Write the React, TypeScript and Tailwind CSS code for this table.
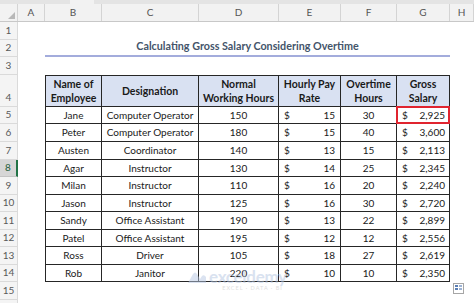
import React from 'react';

const colLetters = ['A', 'B', 'C', 'D', 'E', 'F', 'G', 'H'];
const colWidths = ['w-[27px]', 'w-[57px]', 'w-[97px]', 'w-[80px]', 'w-[62px]', 'w-[56px]', 'w-[53px]', 'w-[24px]'];

const rowHeights = [
  'h-[18px]', 'h-[17px]', 'h-[18px]', 'h-[32px]', 'h-[17px]', 'h-[18px]', 'h-[18px]', 'h-[17px]',
  'h-[18px]', 'h-[17px]', 'h-[18px]', 'h-[17px]', 'h-[18px]', 'h-[17px]', 'h-[18px]', 'h-[18px]',
];

const employees = [
  ['Jane', 'Computer Operator', '150', '15', '30', '2,925'],
  ['Peter', 'Computer Operator', '180', '15', '40', '3,600'],
  ['Austen', 'Coordinator', '140', '13', '15', '2,113'],
  ['Agar', 'Instructor', '130', '14', '25', '2,345'],
  ['Milan', 'Instructor', '110', '16', '20', '2,240'],
  ['Jason', 'Instructor', '125', '16', '30', '2,720'],
  ['Sandy', 'Office Assistant', '190', '13', '22', '2,899'],
  ['Patel', 'Office Assistant', '195', '12', '12', '2,556'],
  ['Ross', 'Driver', '105', '18', '27', '2,619'],
  ['Rob', 'Janitor', '220', '10', '10', '2,350'],
];

const cell = 'border-r border-b border-[#262626] flex items-center shrink-0';

function RowNumber({ n, h }: { n: number; h: string }) {
  const selected = n === 8;
  return (
    <div
      className={`w-[18px] ${h} shrink-0 flex items-end justify-center pb-[1px] text-[10px] border-b border-r ${
        selected
          ? 'bg-[#d6d6d6] text-[#1e5e3a] border-b-[#c3c3c3] border-r-2 border-r-[#217346]'
          : 'bg-[#f4f4f4] text-[#595959] border-[#dadada]'
      }`}
    >
      {n <= 15 ? n : ''}
    </div>
  );
}

function Header() {
  const heads = [
    ['Name of', 'Employee'],
    ['Designation'],
    ['Normal', 'Working Hours'],
    ['Hourly Pay', 'Rate'],
    ['Overtime', 'Hours'],
    ['Gross', 'Salary'],
  ];
  return (
    <>
      {heads.map((lines, i) => (
        <div
          key={i}
          className={`${cell} ${colWidths[i + 1]} border-t ${i === 0 ? 'border-l' : ''} bg-[#d9e1f2] justify-center flex-col text-center font-bold leading-[14px] text-[10.5px] text-[#1a1a1a]`}
        >
          {lines.map(l => (
            <div key={l}>{l}</div>
          ))}
        </div>
      ))}
    </>
  );
}

function DataRow({ r, first }: { r: string[]; first: boolean }) {
  return (
    <>
      <div className={`${cell} ${colWidths[1]} border-l justify-center`}>{r[0]}</div>
      <div className={`${cell} ${colWidths[2]} justify-center`}>{r[1]}</div>
      <div className={`${cell} ${colWidths[3]} justify-center`}>{r[2]}</div>
      <div className={`${cell} ${colWidths[4]} justify-between pl-[5px] pr-[5px]`}>
        <span>$</span>
        <span>{r[3]}</span>
      </div>
      <div className={`${cell} ${colWidths[5]} justify-center`}>{r[4]}</div>
      <div className={`${cell} ${colWidths[6]} justify-between pl-[5px] pr-[4px] relative`}>
        <span>$</span>
        <span>{r[5]}</span>
        {first && (
          <div className="absolute -top-[1px] -bottom-[1px] -left-[1px] -right-[1px] border-2 border-[#e0242f]" />
        )}
      </div>
    </>
  );
}

export default function App() {
  return (
    <div className="w-[474px] h-[303px] overflow-hidden relative bg-white text-[10px] text-[#1a1a1a] font-['Lato','Open_Sans',sans-serif]">
      {/* ribbon edge */}
      <div className="h-[4px] flex bg-[#e4e4e4]">
        <div className="w-[70px]" />
        <div className="w-[24px] bg-[#f2f2f2]" />
      </div>

      {/* column letters */}
      <div className="flex h-[18px] bg-[#f2f2f2] border-b border-[#c8c8c8] text-[10px] text-[#555555]">
        <div className="w-[18px] shrink-0 border-r border-[#d4d4d4] relative">
          <div className="absolute right-[2px] bottom-[2px] w-0 h-0 border-l-[7px] border-l-transparent border-b-[7px] border-b-[#b8b8b8]" />
        </div>
        {colLetters.map((c, i) => (
          <div key={c} className={`${colWidths[i]} shrink-0 border-r border-[#d4d4d4] flex items-center justify-center`}>
            {c}
          </div>
        ))}
      </div>

      {/* sheet rows */}
      {rowHeights.map((h, idx) => {
        const n = idx + 1;
        return (
          <div key={n} className={`flex ${h}`}>
            <RowNumber n={n} h={h} />
            <div className={`${colWidths[0]} shrink-0`} />
            {n === 2 && (
              <div className="w-[405px] shrink-0 flex items-end justify-center border-b-2 border-[#a3acdc] pb-[1px] font-bold text-[10.75px] text-[#44546a]">
                Calculating Gross Salary Considering Overtime
              </div>
            )}
            {n === 4 && <Header />}
            {n >= 5 && n <= 14 && <DataRow r={employees[n - 5]} first={n === 5} />}
          </div>
        );
      })}

      {/* watermark */}
      <div className="absolute left-[187px] top-[270px] flex flex-col items-end opacity-50 pointer-events-none">
        <div className="flex items-center gap-[2px]">
          <svg width="20" height="12" viewBox="0 0 20 12">
            <path d="M1 12 L6 3 Q8 0 10 3 L13 8 L15 5 Q17 3 19 6 L19 12 Z" fill="#b9c9e4" />
          </svg>
          <span className="text-[17px] leading-[14px] font-bold text-[#b5c6e2] tracking-[-0.3px]">exceldemy</span>
        </div>
        <div className="text-[5.5px] leading-[8px] tracking-[1px] text-[#bfbfbf] pr-[4px]">EXCEL · DATA · BI</div>
      </div>

      {/* quick analysis icon */}
      <div className="absolute left-[453px] top-[283px] w-[11px] h-[11px] border border-[#a6a6a6] bg-white p-[1px] flex flex-col gap-[1px]">
        <div className="flex gap-[1px]">
          <div className="w-[4px] h-[2px] bg-[#5b7fb4]" />
          <div className="w-[3px] h-[2px] bg-[#9db3d4]" />
        </div>
        <div className="flex gap-[1px]">
          <div className="w-[4px] h-[2px] bg-[#5b7fb4]" />
          <div className="w-[3px] h-[2px] bg-[#9db3d4]" />
        </div>
      </div>
    </div>
  );
}
